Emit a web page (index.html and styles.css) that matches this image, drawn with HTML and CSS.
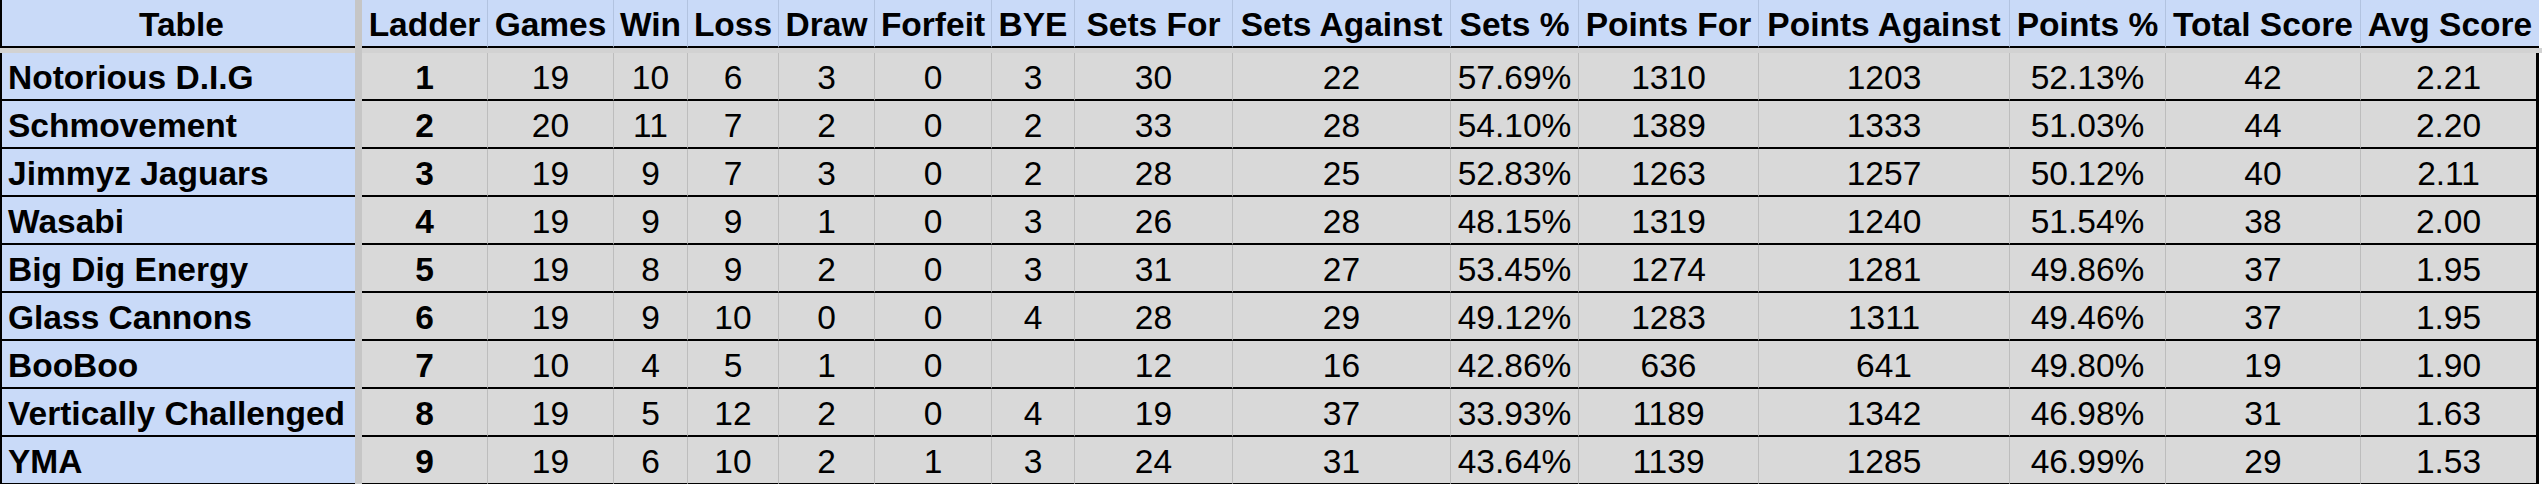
FILE: index.html
```html
<!DOCTYPE html>
<html>
<head>
<meta charset="utf-8">
<title>Table</title>
<link rel="stylesheet" href="styles.css">
</head>
<body>
<div class="sheet">
  <div class="row head">
    <div class="c name">Table</div><div class="sep"></div>
    <div class="c first">Ladder</div><div class="c">Games</div><div class="c">Win</div><div class="c">Loss</div><div class="c">Draw</div><div class="c">Forfeit</div><div class="c">BYE</div><div class="c">Sets For</div><div class="c">Sets Against</div><div class="c">Sets %</div><div class="c">Points For</div><div class="c">Points Against</div><div class="c">Points %</div><div class="c">Total Score</div><div class="c last">Avg Score</div>
  </div>
  <div class="gap"><div class="gap-left"></div><div class="sep"></div><div class="gap-right"></div></div>
  <div class="row data">
    <div class="c name">Notorious D.I.G</div><div class="sep"></div>
    <div class="c first b">1</div><div class="c">19</div><div class="c">10</div><div class="c">6</div><div class="c">3</div><div class="c">0</div><div class="c">3</div><div class="c">30</div><div class="c">22</div><div class="c">57.69%</div><div class="c">1310</div><div class="c">1203</div><div class="c">52.13%</div><div class="c">42</div><div class="c last">2.21</div>
  </div>
  <div class="row data">
    <div class="c name">Schmovement</div><div class="sep"></div>
    <div class="c first b">2</div><div class="c">20</div><div class="c">11</div><div class="c">7</div><div class="c">2</div><div class="c">0</div><div class="c">2</div><div class="c">33</div><div class="c">28</div><div class="c">54.10%</div><div class="c">1389</div><div class="c">1333</div><div class="c">51.03%</div><div class="c">44</div><div class="c last">2.20</div>
  </div>
  <div class="row data">
    <div class="c name">Jimmyz Jaguars</div><div class="sep"></div>
    <div class="c first b">3</div><div class="c">19</div><div class="c">9</div><div class="c">7</div><div class="c">3</div><div class="c">0</div><div class="c">2</div><div class="c">28</div><div class="c">25</div><div class="c">52.83%</div><div class="c">1263</div><div class="c">1257</div><div class="c">50.12%</div><div class="c">40</div><div class="c last">2.11</div>
  </div>
  <div class="row data">
    <div class="c name">Wasabi</div><div class="sep"></div>
    <div class="c first b">4</div><div class="c">19</div><div class="c">9</div><div class="c">9</div><div class="c">1</div><div class="c">0</div><div class="c">3</div><div class="c">26</div><div class="c">28</div><div class="c">48.15%</div><div class="c">1319</div><div class="c">1240</div><div class="c">51.54%</div><div class="c">38</div><div class="c last">2.00</div>
  </div>
  <div class="row data">
    <div class="c name">Big Dig Energy</div><div class="sep"></div>
    <div class="c first b">5</div><div class="c">19</div><div class="c">8</div><div class="c">9</div><div class="c">2</div><div class="c">0</div><div class="c">3</div><div class="c">31</div><div class="c">27</div><div class="c">53.45%</div><div class="c">1274</div><div class="c">1281</div><div class="c">49.86%</div><div class="c">37</div><div class="c last">1.95</div>
  </div>
  <div class="row data">
    <div class="c name">Glass Cannons</div><div class="sep"></div>
    <div class="c first b">6</div><div class="c">19</div><div class="c">9</div><div class="c">10</div><div class="c">0</div><div class="c">0</div><div class="c">4</div><div class="c">28</div><div class="c">29</div><div class="c">49.12%</div><div class="c">1283</div><div class="c">1311</div><div class="c">49.46%</div><div class="c">37</div><div class="c last">1.95</div>
  </div>
  <div class="row data">
    <div class="c name">BooBoo</div><div class="sep"></div>
    <div class="c first b">7</div><div class="c">10</div><div class="c">4</div><div class="c">5</div><div class="c">1</div><div class="c">0</div><div class="c"></div><div class="c">12</div><div class="c">16</div><div class="c">42.86%</div><div class="c">636</div><div class="c">641</div><div class="c">49.80%</div><div class="c">19</div><div class="c last">1.90</div>
  </div>
  <div class="row data">
    <div class="c name">Vertically Challenged</div><div class="sep"></div>
    <div class="c first b">8</div><div class="c">19</div><div class="c">5</div><div class="c">12</div><div class="c">2</div><div class="c">0</div><div class="c">4</div><div class="c">19</div><div class="c">37</div><div class="c">33.93%</div><div class="c">1189</div><div class="c">1342</div><div class="c">46.98%</div><div class="c">31</div><div class="c last">1.63</div>
  </div>
  <div class="row data">
    <div class="c name">YMA</div><div class="sep"></div>
    <div class="c first b">9</div><div class="c">19</div><div class="c">6</div><div class="c">10</div><div class="c">2</div><div class="c">1</div><div class="c">3</div><div class="c">24</div><div class="c">31</div><div class="c">43.64%</div><div class="c">1139</div><div class="c">1285</div><div class="c">46.99%</div><div class="c">29</div><div class="c last">1.53</div>
  </div>
</div>
</body>
</html>
```
FILE: styles.css
```css
html, body {
  margin: 0;
  padding: 0;
  background: #ffffff;
}

.sheet {
  display: flex;
  flex-direction: column;
  width: 2542px;
  font-family: "Liberation Sans", Arial, sans-serif;
  font-size: 33.5px;
  color: #000;
}

.row {
  display: grid;
  grid-template-columns: 355px 7px 125px 126px 74px 91px 96px 117px 83px 158px 218px 128px 180px 251px 156px 195px 179px;
  height: 48px;
}

.c {
  box-sizing: border-box;
  height: 48px;
  border-bottom: 2px solid #000;
  border-left: 1px solid #bdbdbd;
  display: flex;
  align-items: flex-end;
  justify-content: center;
  padding-bottom: 3px;
  white-space: nowrap;
  overflow: hidden;
  line-height: 1.117;
}

.c.first {
  border-left: none;
}

.c.name {
  border-left: 2px solid #000;
  justify-content: flex-start;
  padding-left: 6px;
  font-weight: bold;
  background: #c9daf8;
}

.head .c {
  background: #c9daf8;
  font-weight: bold;
  border-left-color: #b2c3e0;
}

.head .c.name {
  justify-content: center;
  border-left-color: #000;
}

.head .c.first {
  border-left: none;
}

.data .c {
  background: #d9d9d9;
}

.data .c.name {
  background: #c9daf8;
}

.data .c.last {
  border-right: 3px solid #000;
}

.b {
  font-weight: bold;
}

.sep {
  background: #c6c6c6;
}

.gap {
  display: grid;
  grid-template-columns: 355px 7px 2180px;
  height: 5px;
}

.gap-left,
.gap-right {
  background: #d2d2d2;
}
```
